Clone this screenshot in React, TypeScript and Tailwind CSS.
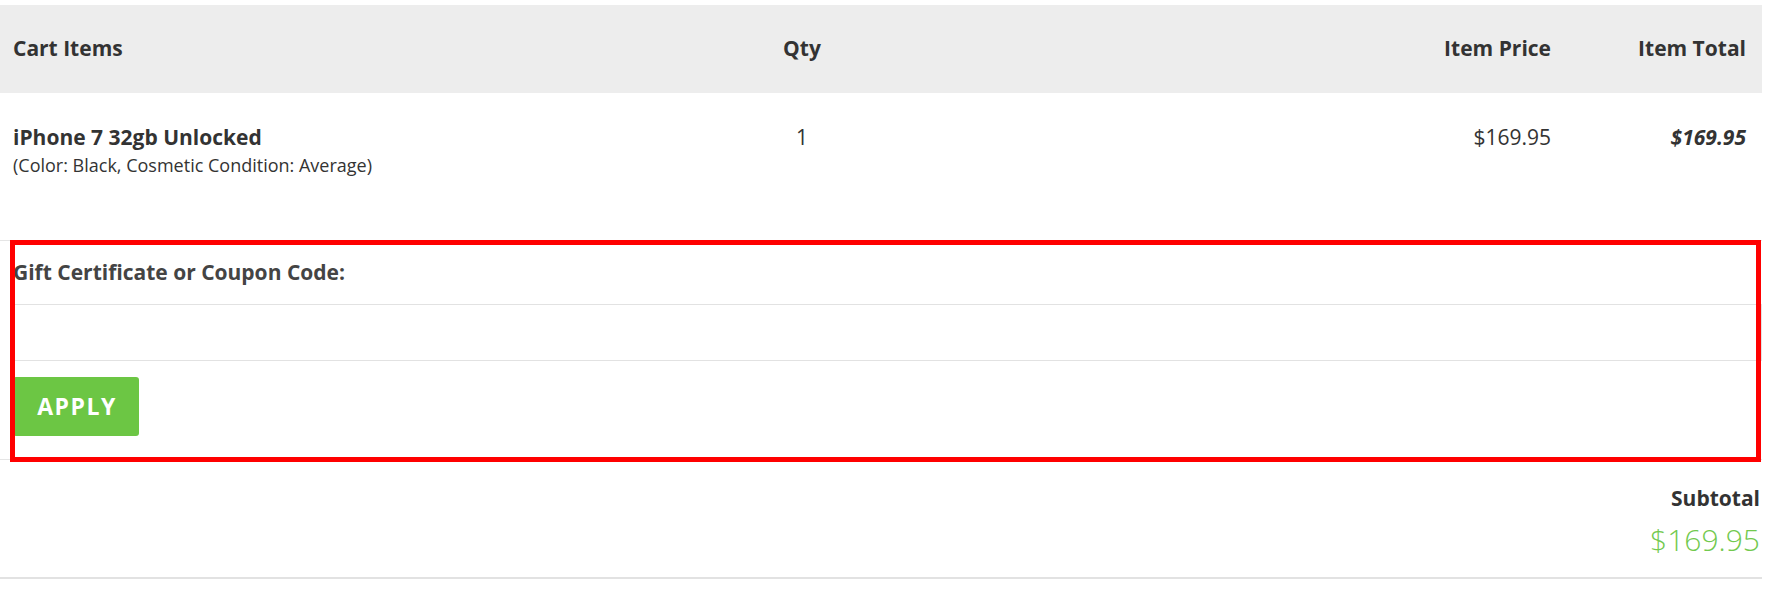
import React from 'react';

const cols = 'grid grid-cols-[700px_204px_662px_196px]';

const CartHeader = () => (
  <div className={`${cols} h-[88px] items-center bg-[#ededed] text-[21px] font-bold text-[#333]`}>
    <div className="pl-[13px]">Cart Items</div>
    <div className="text-center">Qty</div>
    <div className="pr-[15px] text-right">Item Price</div>
    <div className="pr-[16px] text-right">Item Total</div>
  </div>
);

const CartRow = () => (
  <div className={`${cols} h-[147px] items-start pt-[30px] text-[#333]`}>
    <div className="pl-[13px]">
      <div className="text-[21px] font-bold leading-[28px]">iPhone 7 32gb Unlocked</div>
      <div className="mt-[2px] text-[18px] leading-[24px]">(Color: Black, Cosmetic Condition: Average)</div>
    </div>
    <div className="text-center text-[21px] leading-[28px]">1</div>
    <div className="pr-[15px] text-right text-[21px] leading-[28px]">$169.95</div>
    <div className="pr-[16px] text-right text-[21px] font-bold italic leading-[28px]">$169.95</div>
  </div>
);

const CouponForm = () => (
  <div className="relative border-y border-[#e5e5e5] pl-[13px] pt-[17px] pb-[23px]">
    <label className="block text-[21px] font-bold leading-[28px] text-[#444]">
      Gift Certificate or Coupon Code:
    </label>
    <input
      type="text"
      className="mt-[18px] block h-[57px] w-full border border-[#e2e2e2] bg-white outline-none"
    />
    <button className="mt-[16px] h-[59px] w-[126px] rounded-[3px] bg-[#6cc644] pl-[2px] text-[23px] font-bold tracking-[1.5px] text-white">
      APPLY
    </button>
    {/* highlight frame */}
    <div className="pointer-events-none absolute top-[-1px] bottom-[-3px] left-[10px] right-[1px] border-[5px] border-[#ff0000]" />
  </div>
);

const Subtotal = () => (
  <div className="flex flex-col items-end border-b-2 border-[#e2e2e2] pt-[24px] pb-[17px] pr-[2px]">
    <div className="text-[21px] font-bold leading-[28px] text-[#333]">Subtotal</div>
    <div className="mt-[8px] text-[30px] font-light leading-[40px] text-[#72c94e]">$169.95</div>
  </div>
);

export default function App() {
  return (
    <div className="min-h-screen bg-white pt-[5px]" style={{ fontFamily: '"Open Sans", sans-serif' }}>
      <div className="w-[1762px]">
        <CartHeader />
        <CartRow />
        <CouponForm />
        <Subtotal />
      </div>
    </div>
  );
}
